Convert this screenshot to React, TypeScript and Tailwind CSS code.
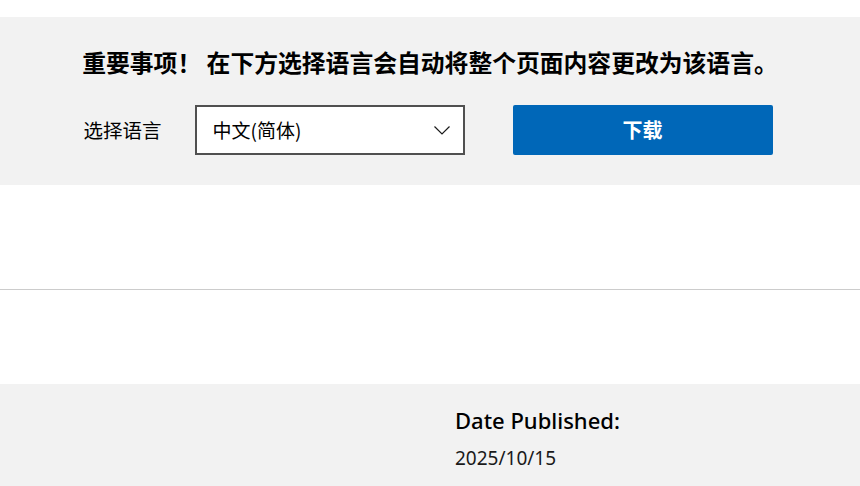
export default function App() {
  const cjk = { fontFamily: '"Microsoft YaHei", "Noto Sans CJK SC", sans-serif' };

  return (
    <main className="w-[860px] h-[486px] overflow-hidden bg-white flex flex-col">
      <div className="h-[17px] bg-white" />

      {/* language picker band */}
      <section className="bg-[#f2f2f2] h-[168px] pt-[29px] flex flex-col items-center" style={cjk}>
        <h2 className="text-[23.8px] leading-[32px] font-bold text-black text-center whitespace-nowrap">
          重要事项！ 在下方选择语言会自动将整个页面内容更改为该语言。
        </h2>
        <div className="mt-[27px] flex items-center justify-center w-full pr-[4px]">
          <label className="w-[111px] text-[19.5px] leading-[26px] text-black">选择语言</label>
          <div className="w-[270px] h-[50px] border-2 border-[#505050] bg-white flex items-center justify-between pl-[16px] pr-[13px]">
            <span className="text-[19px] leading-[26px] text-black">中文(简体)</span>
            <svg width="16" height="9" viewBox="0 0 16 9" fill="none">
              <path d="M0.5 0.5 L8 8 L15.5 0.5" stroke="#1a1a1a" strokeWidth="1.2" />
            </svg>
          </div>
          <button className="ml-[48px] w-[260px] h-[50px] rounded-[2px] bg-[#0067b8] text-white text-[20px] font-bold flex items-center justify-center">
            下载
          </button>
        </div>
      </section>

      <div className="h-[104px] bg-white" />
      <hr className="border-0 border-t border-[#cccccc]" />
      <div className="h-[94px] bg-white" />

      {/* details */}
      <section className="flex-1 bg-[#f2f2f2] grid grid-cols-[455px_1fr] pt-[21px]" style={{ fontFamily: '"Segoe UI", "Noto Sans", sans-serif' }}>
        <div />
        <div>
          <h3 className="text-[22px] leading-[30px] font-medium text-black">Date Published:</h3>
          <p className="mt-[11px] text-[19px] leading-[24px] text-[#1a1a1a]">2025/10/15</p>
        </div>
      </section>
    </main>
  );
}
